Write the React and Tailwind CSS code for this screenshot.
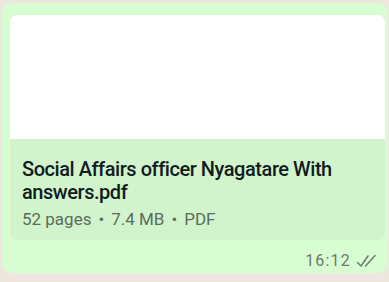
export default function App() {
  return (
    <div className="w-[389px] h-[282px] bg-[#ede7df] pt-[3px] pl-[2px] overflow-hidden" style={{ fontFamily: 'Roboto, "Noto Sans", sans-serif' }}>
      <div className="w-[386px] h-[270px] bg-[#d9fdd3] rounded-[9px] pt-[12px] pl-[8px] overflow-hidden">
        <div className="w-[375px] rounded-[7px] overflow-hidden">
          <div className="h-[124px] bg-white" />
          <div className="h-[101px] bg-[#d1f4cc] pl-[12px] pt-[19px]">
            <div className="text-[20px] leading-[23px] font-medium text-[#111b21] tracking-[-0.45px]">
              Social Affairs officer Nyagatare With answers.pdf
            </div>
            <div className="mt-[5px] flex items-center gap-[7px] text-[17px] leading-[20px] text-[#5c6b5d]">
              <span>52 pages</span>
              <span>•</span>
              <span>7.4 MB</span>
              <span>•</span>
              <span>PDF</span>
            </div>
          </div>
        </div>
        <div className="flex items-center justify-end pr-[11px] mt-[11px] gap-[5px]">
          <span className="text-[16px] leading-[20px] text-[#6b7a6b] tracking-[1.2px]">16:12</span>
          <svg width="21" height="14" viewBox="0 0 21 14" fill="none" stroke="#6f7f6f" strokeWidth="1.6" strokeLinecap="round" strokeLinejoin="round">
            <path d="M1.5 8.5 L5 12 L12 2" />
            <path d="M9.5 12 L19 1.5" />
          </svg>
        </div>
      </div>
    </div>
  );
}
